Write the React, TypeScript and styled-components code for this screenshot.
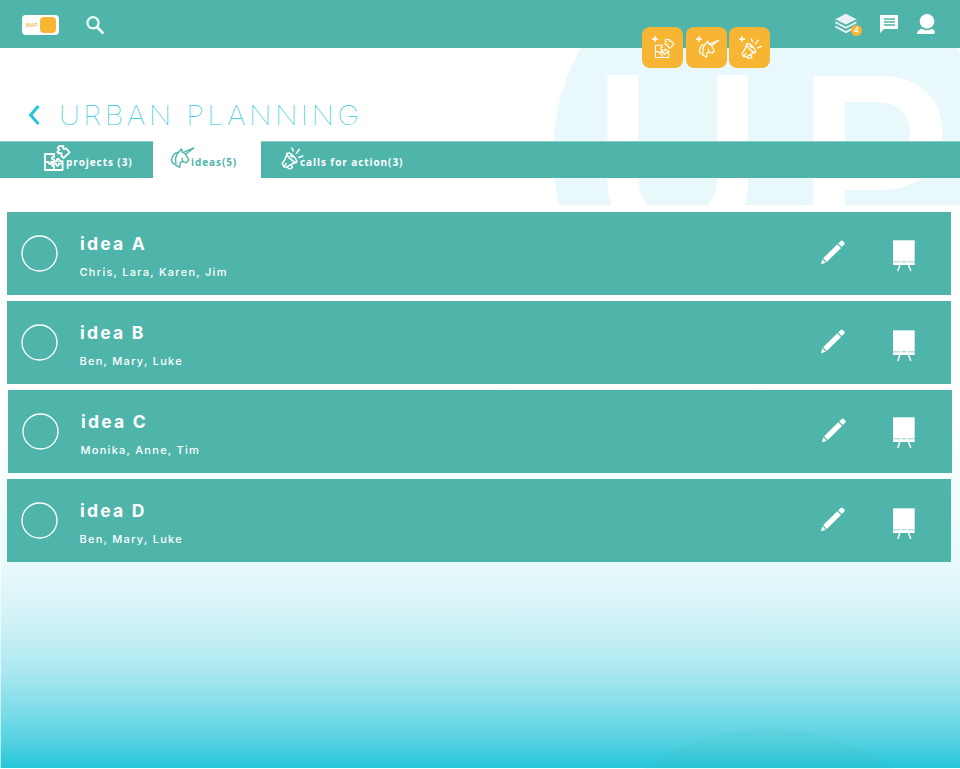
import React from 'react';
import styled, { createGlobalStyle } from 'styled-components';

const TEAL = '#4fb5ab';
const AMBER = '#f8b534';
const CYAN = '#26c6da';

const GlobalStyle = createGlobalStyle`
  * { box-sizing: border-box; }
  html, body { margin: 0; padding: 0; background: #fff; }
  body { overflow: hidden; }
`;

const Page = styled.div`
  position: relative;
  width: 960px;
  height: 769px;
  overflow: hidden;
  background: linear-gradient(90deg, rgba(255, 255, 255, 0.6) 1px, transparent 1px),
    linear-gradient(180deg, #fff 0, #fff 380px, #f8fefe 460px, #e8f9fc 565px, #dcf5f9 598px,
      #c4eff4 638px, #a9e7f0 673px, #7bdce8 713px, #4ed0e0 745px, #26c6da 767px);
  background-size: 960px 768px;
  background-repeat: no-repeat;
  font-family: Inter, 'Liberation Sans', sans-serif;
`;

const Header = styled.header`
  position: relative;
  z-index: 2;
  display: flex;
  align-items: center;
  height: 48px;
  padding: 2px 24px 0 22px;
  background: ${TEAL};
`;

const MapToggle = styled.button`
  display: flex;
  align-items: center;
  justify-content: space-between;
  width: 37px;
  height: 20px;
  margin: 0 27px 0 0;
  padding: 2px 3px 2px 4px;
  border: 0;
  border-radius: 4px;
  background: #fff;
  color: ${AMBER};
  font: 500 5px/7px Inter, sans-serif;
  letter-spacing: 0.2px;
`;

const Knob = styled.span`
  width: 16px;
  height: 16px;
  border-radius: 4px;
  background: ${AMBER};
`;

const HeaderActions = styled.div`
  display: flex;
  align-items: center;
  margin-left: auto;
  gap: 18px;
`;

const Stack = styled.div`
  position: relative;
  width: 27px;
  height: 24px;
`;

const Badge = styled.span`
  position: absolute;
  left: 16px;
  top: 12px;
  width: 11px;
  height: 11px;
  border-radius: 50%;
  background: ${AMBER};
  color: #fff;
  font: 600 7.5px/11px Inter, sans-serif;
  text-align: center;
`;

const CreateMenu = styled.div`
  position: absolute;
  z-index: 3;
  left: 642px;
  top: 27px;
  display: grid;
  grid-template-columns: 41px 41px 41px;
  column-gap: 2.6px;
`;

const CreateButton = styled.button`
  width: 41px;
  height: 41px;
  padding: 0;
  border: 0;
  border-radius: 8px;
  background: ${AMBER};
  color: #fff;
`;

const Watermark = styled.div`
  position: absolute;
  left: 0;
  top: 48px;
  width: 960px;
  height: 157px;
  overflow: hidden;
`;

const Disc = styled.div<{ $top: number; $tint: string }>`
  position: absolute;
  left: 553px;
  top: ${(p) => p.$top}px;
  width: 432px;
  height: 432px;
  border-radius: 50%;
  background: ${(p) => p.$tint};
`;

const Initial = styled.span<{ $left: number; $top: number; $size: number; $stretch: number }>`
  position: absolute;
  left: ${(p) => p.$left}px;
  top: ${(p) => p.$top}px;
  color: #fff;
  font: 600 ${(p) => p.$size}px/1 Inter, sans-serif;
  transform: scaleX(${(p) => p.$stretch});
  transform-origin: 0 0;
`;

const TitleBar = styled.div`
  position: relative;
  display: flex;
  align-items: center;
  height: 93px;
  padding: 41px 0 0 28px;
`;

const Title = styled.h1`
  margin: -1px 0 0 18px;
  color: ${CYAN};
  font: 100 27.5px/34px Inter, sans-serif;
  letter-spacing: 3.2px;
  white-space: nowrap;
  transform: scaleX(1.06);
  transform-origin: 0 50%;
`;

const Tabs = styled.nav`
  position: relative;
  display: flex;
  height: 37px;
  background: ${TEAL};
  border-top: 1px solid #8acdc6;
`;

const Tab = styled.a<{ $width: number; $pad: number; $active?: boolean }>`
  display: flex;
  align-items: flex-start;
  width: ${(p) => p.$width}px;
  height: 37px;
  margin-top: -1px;
  padding: 4px 0 0 ${(p) => p.$pad}px;
  background: ${(p) => (p.$active ? '#fff' : 'transparent')};
  color: ${(p) => (p.$active ? TEAL : '#fff')};
  font: 700 10px/14px 'Open Sans', sans-serif;
  letter-spacing: 0.92px;
  white-space: nowrap;
`;

const TabGlyph = styled.svg<{ $drop: number }>`
  flex: none;
  margin-top: ${(p) => p.$drop}px;
`;

const TabLabel = styled.span<{ $shift: number }>`
  margin: 10px 0 0 ${(p) => p.$shift}px;
`;

const List = styled.main`
  position: relative;
  display: grid;
  row-gap: 6px;
  padding: 34px 9px 0 7px;
`;

const Row = styled.article<{ $nudge?: boolean }>`
  display: flex;
  align-items: flex-start;
  width: 944px;
  height: 83px;
  margin-left: ${(p) => (p.$nudge ? 1 : 0)}px;
  padding-left: 14px;
  background: ${TEAL};
  color: #fff;
`;

const Ring = styled.svg<{ $drop: number }>`
  flex: none;
  margin-top: ${(p) => p.$drop}px;
`;

const Info = styled.div`
  flex: none;
  width: 762px;
  padding: 20px 0 0 21.5px;
`;

const IdeaName = styled.h2`
  margin: 0 0 0 0.5px;
  font: 700 17.5px/24px Inter, sans-serif;
  letter-spacing: 2.2px;
`;

const People = styled.p`
  margin: 8px 0 0;
  font: 500 11px/16px Inter, sans-serif;
  letter-spacing: 1.27px;
`;

const PencilSlot = styled.span`
  flex: none;
  width: 26px;
  margin-top: 28px;
  line-height: 0;
`;

const EaselSlot = styled.span<{ $drop: number; $gap: number }>`
  flex: none;
  margin: ${(p) => p.$drop}px 0 0 ${(p) => p.$gap}px;
  line-height: 0;
`;

const Puzzle = () => (
  <>
    <path d="M1 9H10V12C7.4 11 6.8 15.4 10 14.4V17H7C8 19.6 3.8 19.6 4.7 17H1Z" />
    <path d="M1 17V25H18.6V16.2H15.2C16.3 13.2 12 13.2 12.8 16.2H10V18.6C7.4 17.8 7.4 22 10 21V25" />
    <path d="M10 18.6H12.2C11.6 21.6 15.4 21.6 14.8 18.6H18" />
    <path d="M13.2 6.9 15 8.7C17.2 7 18.8 9.2 17.2 10.8L19.6 13 25.6 7.4 21.8 3.2C20 5.2 17.8 3 19.6 1.2H15.2L13.6 2.8 15.5 4.6Z" />
  </>
);

const Unicorn = () => (
  <>
    <path d="M12.8 5.6 23.8 1 15.6 7.2" />
    <path d="M8.6 5.2 11.4 2 12.6 5.4C15.2 5.8 16.2 7.4 16.8 9.4L18.8 13.2 16.2 15.8 13.4 14.6C11.6 14.2 10.6 14.8 10.2 16L9.8 20.4 5.6 17.8C2.8 16.6 1.6 15 1.6 13C1.8 9.2 4.8 5.4 8.6 5.2Z" />
    <path d="M8.4 5.4C5.8 8.6 4.8 12 6 16.4M13.4 14.6C12.2 13.8 11.8 12.6 12 11.2" />
  </>
);

const Megaphone = () => (
  <>
    <path d="M6.2 6.4C5.2 10.2 4 13.4 1.2 16.4L2.8 19.8 6.2 20C8.6 17.6 12 16.5 15.2 15.4" />
    <path d="M6.2 6.4C7.8 5.2 11 7.2 13.4 10.2 15.6 13 16.4 15 15.2 15.4 12.8 15.6 5.6 9.6 6.2 6.4ZM9.4 8.6 11.6 10" />
    <path d="M6.2 20C7.2 22.3 10.3 22.2 11.5 20.1L10.3 17.8M2.8 19.8 5.2 16.6" />
    <path d="M11 1 12.2 3.9M18.4 2.3 15.4 6.3M21.8 9 17.8 10.5" />
  </>
);

const shapes = { puzzle: Puzzle, unicorn: Unicorn, megaphone: Megaphone };
type ShapeName = keyof typeof shapes;

const strokes: Record<ShapeName, number> = { puzzle: 1.8, unicorn: 1.4, megaphone: 1.5 };
const drops: Record<ShapeName, number> = { puzzle: 0, unicorn: 2, megaphone: 1.5 };

const TabIcon = ({ name }: { name: ShapeName }) => {
  const Shape = shapes[name];
  return (
    <TabGlyph $drop={drops[name]} width="27" height="27" viewBox="0 0 27 27" fill="none" stroke="currentColor" strokeWidth={strokes[name]} strokeLinejoin="round" strokeLinecap="round">
      <Shape />
    </TabGlyph>
  );
};

const placement: Record<ShapeName, string> = {
  puzzle: 'translate(12.6 11.5) scale(.76)',
  unicorn: 'translate(12 12.5) scale(.87)',
  megaphone: 'translate(12 11) scale(.94)',
};

const CreateIcon = ({ name }: { name: ShapeName }) => {
  const Shape = shapes[name];
  return (
    <svg width="41" height="41" viewBox="0 0 41 41" fill="none" stroke="currentColor" strokeLinejoin="round" strokeLinecap="round">
      <path d="M13 9V15M10 12H16" strokeWidth="1.4" strokeLinecap="butt" />
      <g transform={placement[name]} strokeWidth="1.35">
        <Shape />
      </g>
    </svg>
  );
};

const SearchIcon = () => (
  <svg width="19" height="20" viewBox="0 0 19 20" fill="none" stroke="#f1fafa" strokeWidth="2.3">
    <circle cx="7" cy="7.8" r="5.6" />
    <path d="M11 12 17.4 18.6" strokeWidth="2.8" />
  </svg>
);

const LayersIcon = () => (
  <svg width="24" height="24" viewBox="0 0 24 24" fill="#eaf2f6">
    <path d="M11 .8 21.5 6.2 11 11.6.3 6.2Z" />
    <path d="M.3 8.3 11 13.8 21.5 8.3V10.3L11 15.8.3 10.3ZM.3 12.6 11 18.1 21.5 12.6V14.6L11 20.2.3 14.6Z" />
  </svg>
);

const ChatIcon = () => (
  <svg width="18" height="20" viewBox="0 0 18 20">
    <path d="M0 0H18V14H4L0 18Z" fill="#fff" />
    <path d="M4 4H15M4 7H15M4 10H15" stroke={TEAL} strokeWidth="1.6" />
  </svg>
);

const UserIcon = () => (
  <svg width="20" height="22" viewBox="0 0 20 22" fill="#fff">
    <circle cx="11" cy="7.4" r="7.3" />
    <path d="M.9 20C1.4 16.4 3.6 15 6.2 14.9 9.3 16.6 12.8 16.6 15.5 14.9 18 15.3 19 16.7 18.9 18.7L17.5 20Z" />
  </svg>
);

const BackIcon = () => (
  <svg width="13" height="22" viewBox="0 0 13 22" fill="none" stroke={CYAN} strokeWidth="3">
    <path d="M10.5 2 2.6 11 10.5 20" />
  </svg>
);

const PencilIcon = () => (
  <svg width="26" height="28" viewBox="0 0 26 28" fill="#fff">
    <path d="M17.3 4.2 21 7.9 6.8 22 3.1 18.3Z" />
    <path d="M18.2 3.4 20.7.9Q21.8 0 22.8.9L24.4 2.5Q25.2 3.5 24.3 4.5L21.9 7Z" />
    <path d="M2.3 19.2 5.9 22.8 1 24.2Z" />
  </svg>
);

const EaselIcon = () => (
  <svg width="22" height="32" viewBox="0 0 22 32">
    <path d="M0 .3H21.7V25H0Z" fill="#fff" />
    <path d="M0 21.8H22" stroke={TEAL} strokeWidth=".8" strokeDasharray="7 1.5 5 1.5 7" opacity=".75" />
    <path d="M6.8 25 4.8 31M15.6 25 17.8 31" stroke="#fff" strokeWidth="1.5" />
  </svg>
);

const createActions: ShapeName[] = ['puzzle', 'unicorn', 'megaphone'];

const ideas = [
  { name: 'idea A', people: 'Chris, Lara, Karen, Jim', ring: 23, easel: 28 },
  { name: 'idea B', people: 'Ben, Mary, Luke', ring: 22.5, easel: 29 },
  { name: 'idea C', people: 'Monika, Anne, Tim', ring: 22.5, easel: 27, nudge: true },
  { name: 'idea D', people: 'Ben, Mary, Luke', ring: 22.5, easel: 29 },
];

export default function App() {
  return (
    <>
      <GlobalStyle />
      <Page>
        <Watermark>
          <Disc $top={-110} $tint="#e8f8fb" />
          <Initial $left={590} $top={-4} $size={228} $stretch={1.045}>U</Initial>
          <Initial $left={795} $top={-5} $size={237} $stretch={1.035}>P</Initial>
        </Watermark>
        <Disc $top={729} $tint="rgba(79, 181, 171, 0.08)" />

        <Header>
          <MapToggle>
            MAP
            <Knob />
          </MapToggle>
          <SearchIcon />
          <HeaderActions>
            <Stack>
              <LayersIcon />
              <Badge>4</Badge>
            </Stack>
            <ChatIcon />
            <UserIcon />
          </HeaderActions>
        </Header>
        <CreateMenu>
          {createActions.map((name) => (
            <CreateButton key={name} aria-label={name}>
              <CreateIcon name={name} />
            </CreateButton>
          ))}
        </CreateMenu>

        <TitleBar>
          <BackIcon />
          <Title>URBAN PLANNING</Title>
        </TitleBar>

        <Tabs>
          <Tab $width={153} $pad={44}>
            <TabIcon name="puzzle" />
            <TabLabel $shift={-5}>projects (3)</TabLabel>
          </Tab>
          <Tab $width={107.6} $pad={17} $active>
            <TabIcon name="unicorn" />
            <TabLabel $shift={-6}>ideas(5)</TabLabel>
          </Tab>
          <Tab $width={200} $pad={20.4}>
            <TabIcon name="megaphone" />
            <TabLabel $shift={-8}>calls for action(3)</TabLabel>
          </Tab>
        </Tabs>

        <List>
          {ideas.map((idea) => (
            <Row key={idea.name} $nudge={idea.nudge}>
              <Ring $drop={idea.ring} width="37" height="37" viewBox="0 0 37 37" fill="none" stroke="#fff" strokeWidth="1.4">
                <circle cx="18.5" cy="18.5" r="17.5" />
              </Ring>
              <Info>
                <IdeaName>{idea.name}</IdeaName>
                <People>{idea.people}</People>
              </Info>
              <PencilSlot>
                <PencilIcon />
              </PencilSlot>
              <EaselSlot $drop={idea.easel} $gap={idea.nudge ? 46 : 47}>
                <EaselIcon />
              </EaselSlot>
            </Row>
          ))}
        </List>
      </Page>
    </>
  );
}
